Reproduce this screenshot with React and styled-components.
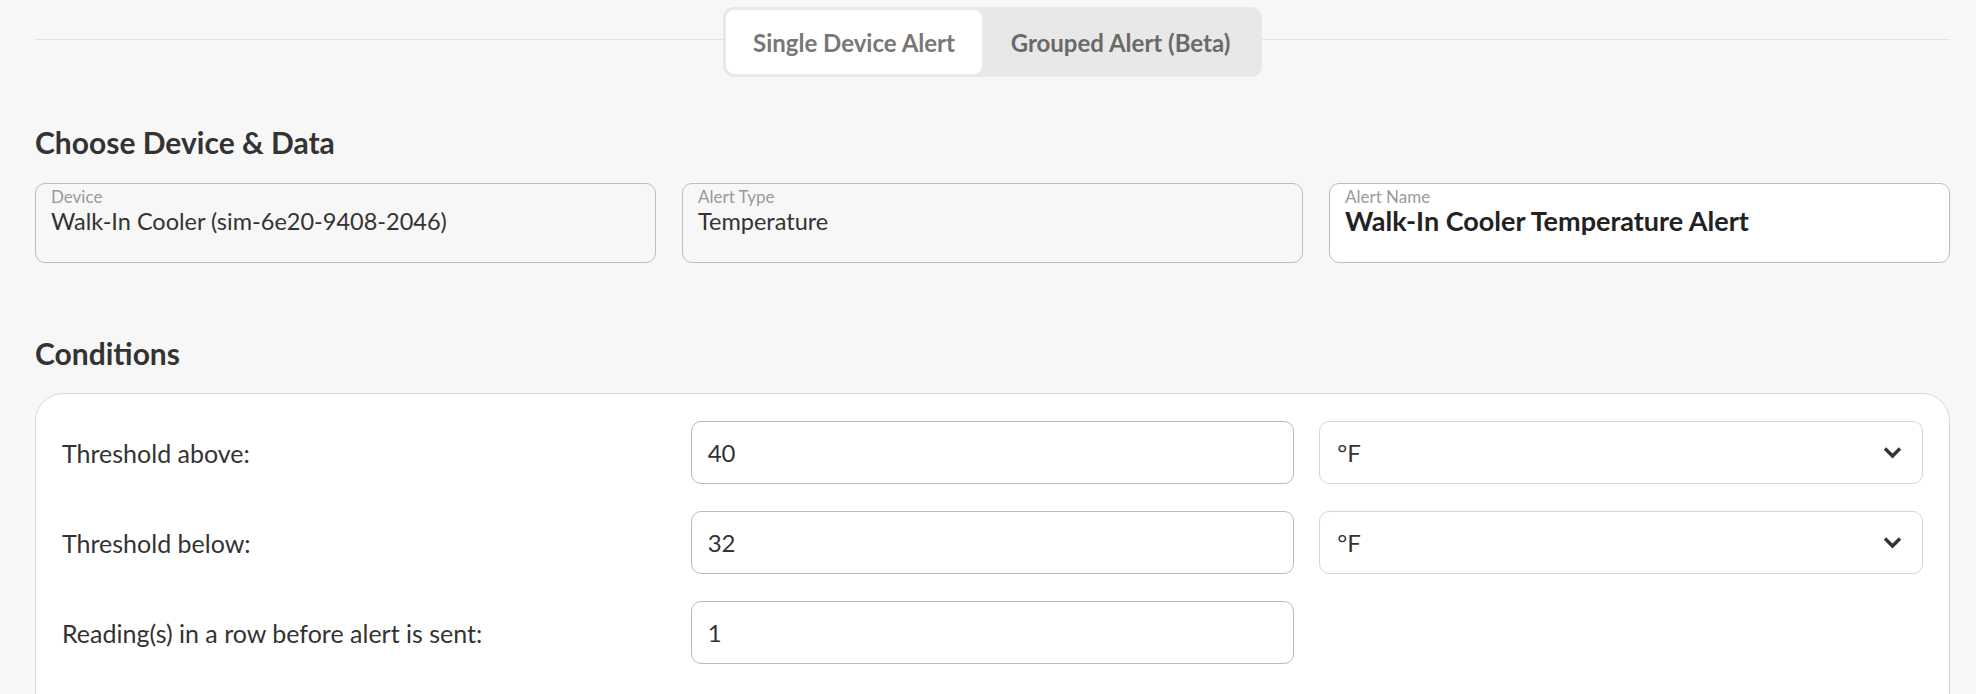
import React from "react";
import styled, { createGlobalStyle } from "styled-components";

const GlobalStyle = createGlobalStyle`
  * { box-sizing: border-box; }
  body {
    margin: 0;
    background: #f7f7f7;
    font-family: "Lato", "Liberation Sans", sans-serif;
    color: #333;
  }
`;

const Page = styled.div`
  padding: 7px 26px 0 35px;
`;

const Header = styled.div`
  display: flex;
  align-items: flex-start;
`;

const Rule = styled.div`
  flex: 1;
  height: 1px;
  margin-top: 32px;
  background: #e2e2e2;
`;

const Tabs = styled.div`
  display: flex;
  height: 70px;
  padding: 3px;
  background: #e8e8e8;
  border-radius: 11px;
`;

const Tab = styled.button`
  width: ${(p) => p.$w}px;
  border: none;
  border-radius: 8px;
  background: ${(p) => (p.$active ? "#fff" : "transparent")};
  color: ${(p) => (p.$active ? "#777" : "#6a6a6a")};
  font-family: inherit;
  font-size: 24px;
  font-weight: 700;
  cursor: pointer;
`;

const SectionTitle = styled.h2`
  margin: ${(p) => p.$top}px 0 0;
  font-size: 30px;
  line-height: 36px;
  font-weight: 700;
  color: #333;
`;

const FieldRow = styled.div`
  display: grid;
  grid-template-columns: repeat(3, 1fr);
  gap: 26px;
  margin-top: 23px;
`;

const Field = styled.div`
  height: 80px;
  padding: 4px 15px 0;
  border: 1px solid #bdbdbd;
  border-radius: 10px;
  background: ${(p) => (p.$editable ? "#fff" : "#f7f7f7")};
`;

const FieldLabel = styled.div`
  font-size: 17px;
  line-height: 18px;
  color: #9a9a9a;
`;

const FieldValue = styled.div`
  font-size: ${(p) => (p.$bold ? 27 : 23.5)}px;
  line-height: 30px;
  color: ${(p) => (p.$bold ? "#222" : "#333")};
  font-weight: ${(p) => (p.$bold ? 700 : 400)};
`;

const Card = styled.div`
  margin-top: 22px;
  padding: 27px 26px 60px;
  background: #fff;
  border: 1px solid #d9d9d9;
  border-radius: 28px;
  display: grid;
  grid-template-columns: repeat(3, 1fr);
  column-gap: 25px;
  row-gap: 27px;
`;

const RowLabel = styled.div`
  display: flex;
  align-items: center;
  font-size: 25px;
  color: #333;
`;

const Input = styled.div`
  height: 63px;
  display: flex;
  align-items: center;
  padding: 0 16px;
  border: 1px solid #bbb;
  border-radius: 10px;
  font-size: 24px;
  color: #333;
  background: #fff;
`;

const Select = styled(Input)`
  justify-content: space-between;
  padding: 0 20px 0 17px;
  border-color: #d6d6d6;
`;

const Chevron = () => (
  <svg width="19" height="13" viewBox="0 0 19 13">
    <path d="M2 2.5 L9.5 10 L17 2.5" fill="none" stroke="#333" strokeWidth="3.4" />
  </svg>
);

const conditions = [
  { label: "Threshold above:", value: "40", unit: "°F" },
  { label: "Threshold below:", value: "32", unit: "°F" },
  { label: "Reading(s) in a row before alert is sent:", value: "1" },
];

export default function App() {
  return (
    <>
      <GlobalStyle />
      <Page>
        <Header>
          <Rule />
          <Tabs>
            <Tab $active $w={256}>Single Device Alert</Tab>
            <Tab $w={277}>Grouped Alert (Beta)</Tab>
          </Tabs>
          <Rule />
        </Header>

        <SectionTitle $top={47}>Choose Device &amp; Data</SectionTitle>
        <FieldRow>
          <Field>
            <FieldLabel>Device</FieldLabel>
            <FieldValue>Walk-In Cooler (sim-6e20-9408-2046)</FieldValue>
          </Field>
          <Field>
            <FieldLabel>Alert Type</FieldLabel>
            <FieldValue>Temperature</FieldValue>
          </Field>
          <Field $editable>
            <FieldLabel>Alert Name</FieldLabel>
            <FieldValue $bold>Walk-In Cooler Temperature Alert</FieldValue>
          </Field>
        </FieldRow>

        <SectionTitle $top={72}>Conditions</SectionTitle>
        <Card>
          {conditions.map((c) => (
            <React.Fragment key={c.label}>
              <RowLabel>{c.label}</RowLabel>
              <Input>{c.value}</Input>
              {c.unit ? (
                <Select>
                  {c.unit}
                  <Chevron />
                </Select>
              ) : (
                <div />
              )}
            </React.Fragment>
          ))}
        </Card>
      </Page>
    </>
  );
}
